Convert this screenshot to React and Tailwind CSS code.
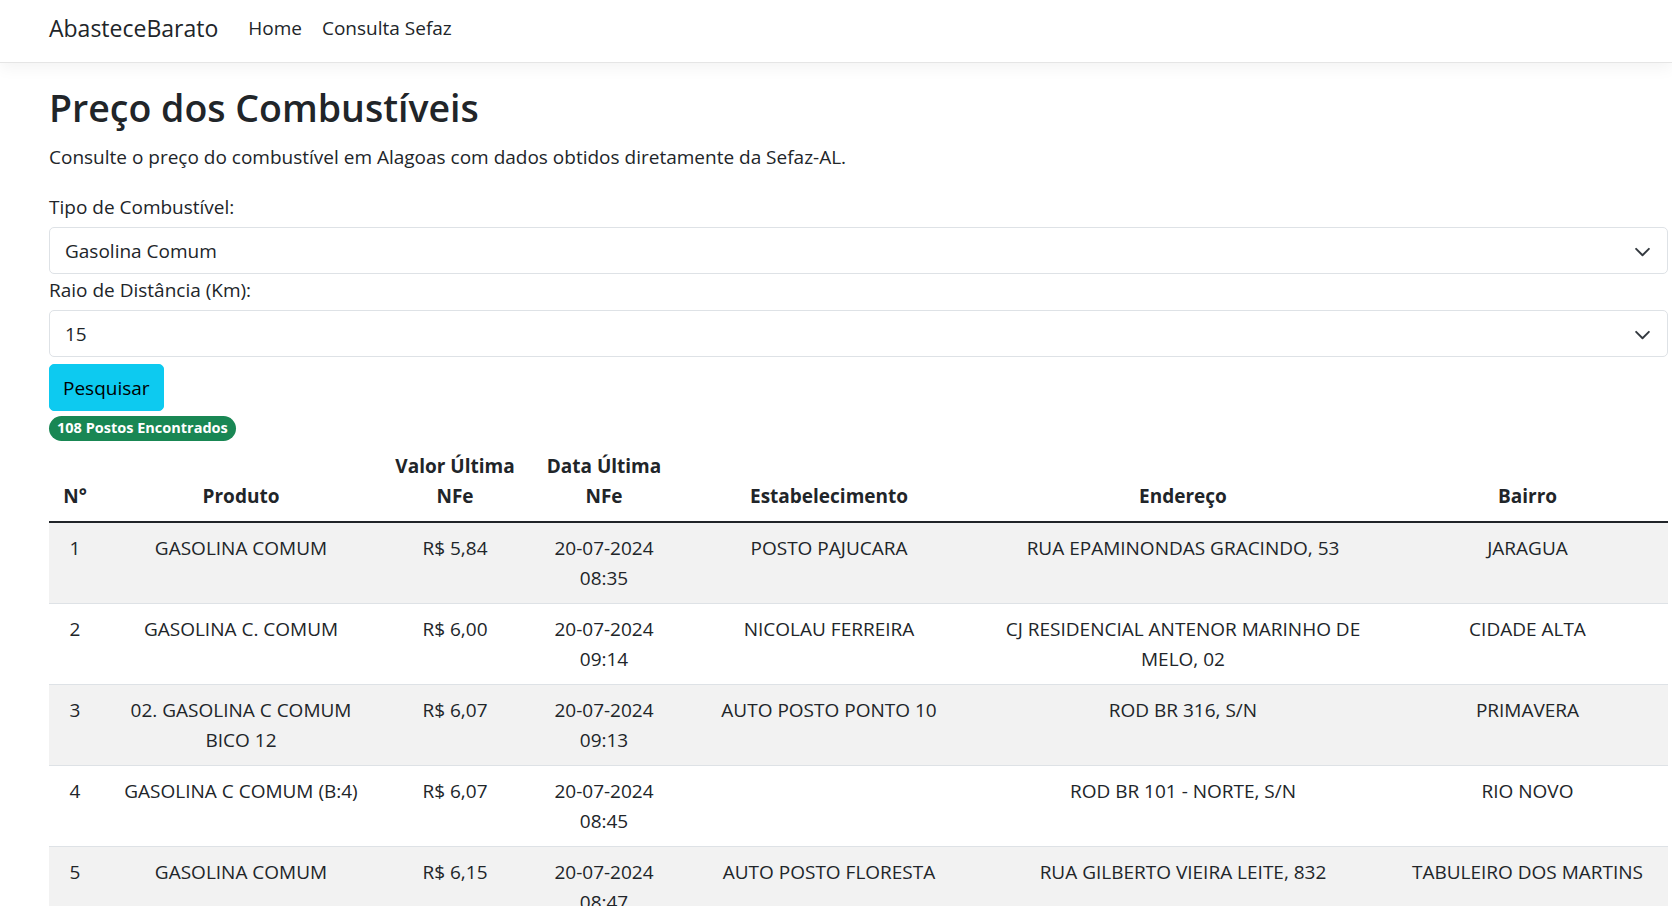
import { useState } from "react"

const POSTOS = [
  { n: 1, produto: ["GASOLINA COMUM"], valor: "R$ 5,84", data: "20-07-2024", hora: "08:35", estab: ["POSTO PAJUCARA"], end: ["RUA EPAMINONDAS GRACINDO, 53"], bairro: "JARAGUA" },
  { n: 2, produto: ["GASOLINA C. COMUM"], valor: "R$ 6,00", data: "20-07-2024", hora: "09:14", estab: ["NICOLAU FERREIRA"], end: ["CJ RESIDENCIAL ANTENOR MARINHO DE", "MELO, 02"], bairro: "CIDADE ALTA" },
  { n: 3, produto: ["02. GASOLINA C COMUM", "BICO 12"], valor: "R$ 6,07", data: "20-07-2024", hora: "09:13", estab: ["AUTO POSTO PONTO 10"], end: ["ROD BR 316, S/N"], bairro: "PRIMAVERA" },
  { n: 4, produto: ["GASOLINA C COMUM (B:4)"], valor: "R$ 6,07", data: "20-07-2024", hora: "08:45", estab: [""], end: ["ROD BR 101 - NORTE, S/N"], bairro: "RIO NOVO" },
  { n: 5, produto: ["GASOLINA COMUM"], valor: "R$ 6,15", data: "20-07-2024", hora: "08:47", estab: ["AUTO POSTO FLORESTA"], end: ["RUA GILBERTO VIEIRA LEITE, 832"], bairro: "TABULEIRO DOS MARTINS" },
  { n: 6, produto: ["GASOLINA COMUM"], valor: "R$ 6,19", data: "20-07-2024", hora: "09:02", estab: ["POSTO SAO JORGE"], end: ["AV FERNANDES LIMA, 1200"], bairro: "FAROL" },
]

const Lines = ({ items }) => items.map((t, i) => (
  <span key={i} className="block">{t}</span>
))

function Chevron() {
  return (
    <svg className="pointer-events-none absolute right-[17px] top-1/2 -translate-y-1/2" width="17" height="13" viewBox="0 0 16 12">
      <path fill="none" stroke="#343a40" strokeLinecap="round" strokeLinejoin="round" strokeWidth="1.8" d="m2 4 6 6 6-6" />
    </svg>
  )
}

export default function App() {
  const [tipo, setTipo] = useState("Gasolina Comum")
  const [raio, setRaio] = useState("15")

  return (
    <div className="min-h-screen bg-white text-[#212529] font-['Open_Sans',sans-serif] text-[19px] leading-[30px]">
      <header className="relative z-10 h-[63px] bg-white border-b border-[#e5e5e5] shadow-[0_5px_15px_rgba(0,0,0,0.05)]">
        <nav className="h-full flex items-center pl-[49px] pb-[6px]">
          <a href="#" className="text-[23px] leading-[36px] mr-[30px]">AbasteceBarato</a>
          <a href="#" className="mr-[20px]">Home</a>
          <a href="#">Consulta Sefaz</a>
        </nav>
      </header>

      <main className="pl-[49px] pr-[4px]">
        <h1 className="mt-[19px] mb-[8px] text-[37.5px] leading-[52px] font-semibold">Preço dos Combustíveis</h1>
        <p className="mb-[20px]">Consulte o preço do combustível em Alagoas com dados obtidos diretamente da Sefaz-AL.</p>

        <label className="block mb-[5px]">Tipo de Combustível:</label>
        <div className="relative">
          <select value={tipo} onChange={e => setTipo(e.target.value)}
            className="block w-full h-[47px] appearance-none bg-white border border-[#dee2e6] rounded-[5px] pl-[15px] pr-[45px] text-[19px] outline-none">
            <option>Gasolina Comum</option>
            <option>Gasolina Aditivada</option>
            <option>Etanol</option>
            <option>Diesel S10</option>
          </select>
          <Chevron />
        </div>

        <label className="block mt-[1px] mb-[5px]">Raio de Distância (Km):</label>
        <div className="relative">
          <select value={raio} onChange={e => setRaio(e.target.value)}
            className="block w-full h-[47px] appearance-none bg-white border border-[#dee2e6] rounded-[5px] pl-[15px] pr-[45px] text-[19px] outline-none">
            <option>5</option>
            <option>10</option>
            <option>15</option>
            <option>30</option>
          </select>
          <Chevron />
        </div>

        <button className="mt-[7px] h-[47px] px-[13px] bg-[#0dcaf0] text-black rounded-[5px] border border-[#0dcaf0]">Pesquisar</button>

        <div className="mt-[5px] flex">
          <span className="flex items-center h-[25px] px-[8px] rounded-full bg-[#198754] text-white text-[14.5px] font-bold leading-none">108 Postos Encontrados</span>
        </div>

        <table className="w-full table-fixed border-collapse text-center">
          <colgroup>
            <col className="w-[52px]" />
            <col className="w-[280px]" />
            <col className="w-[148px]" />
            <col className="w-[150px]" />
            <col className="w-[300px]" />
            <col className="w-[408px]" />
            <col />
          </colgroup>
          <thead>
            <tr className="border-b-2 border-[#212529]">
              {[["N°"], ["Produto"], ["Valor Última", "NFe"], ["Data Última", "NFe"], ["Estabelecimento"], ["Endereço"], ["Bairro"]].map(h => (
                <th key={h.join()} className="px-[10px] py-[10px] align-bottom font-bold"><Lines items={h} /></th>
              ))}
            </tr>
          </thead>
          <tbody>
            {POSTOS.map((p, i) => (
              <tr key={p.n} className={`border-b border-[#dee2e6] ${i % 2 === 0 ? "bg-[#f2f2f2]" : "bg-white"}`}>
                <td className="px-[10px] py-[10px] align-top">{p.n}</td>
                <td className="px-[10px] py-[10px] align-top"><Lines items={p.produto} /></td>
                <td className="px-[10px] py-[10px] align-top">{p.valor}</td>
                <td className="px-[10px] py-[10px] align-top"><Lines items={[p.data, p.hora]} /></td>
                <td className="px-[10px] py-[10px] align-top"><Lines items={p.estab} /></td>
                <td className="px-[10px] py-[10px] align-top"><Lines items={p.end} /></td>
                <td className="px-[10px] py-[10px] align-top">{p.bairro}</td>
              </tr>
            ))}
          </tbody>
        </table>
      </main>
    </div>
  )
}
